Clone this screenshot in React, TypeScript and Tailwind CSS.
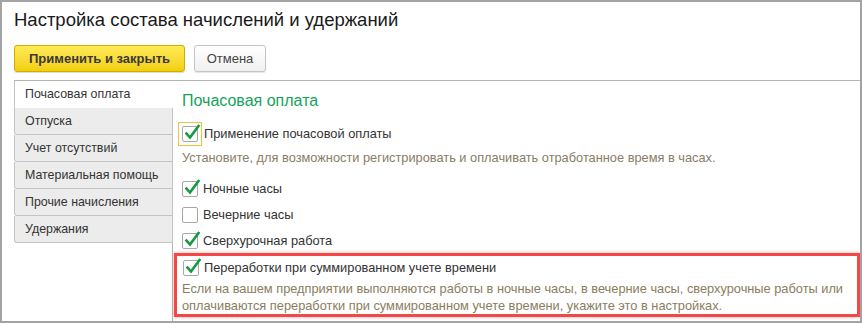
import React from "react";

function Check({ checked }: { checked: boolean }) {
  return (
    <span className="relative inline-block w-[16px] h-[16px] border border-[#a8a8a8] rounded-[2px] bg-white shrink-0">
      {checked && (
        <svg
          className="absolute left-[1px] top-[-4px] overflow-visible"
          width="16"
          height="18"
          viewBox="0 0 16 18"
        >
          <path d="M2.5 10.5 L6 14.5 L14.5 3" fill="none" stroke="#15993f" strokeWidth="2.6" strokeLinecap="square" strokeLinejoin="miter" />
        </svg>
      )}
    </span>
  );
}

function Row({ label, checked, focus }: { label: string; checked: boolean; focus?: boolean }) {
  return (
    <div className="flex items-center h-[26px] pl-[6px]">
      {focus ? (
        <span className="flex items-center justify-center w-[24px] h-[24px] -ml-[4px] -mr-[3px] border border-[#f0c43a]">
          <Check checked={checked} />
        </span>
      ) : (
        <Check checked={checked} />
      )}
      <span className="ml-[5px] text-[12.8px] text-[#333]">{label}</span>
    </div>
  );
}

const tabs = ["Отпуска", "Учет отсутствий", "Материальная помощь", "Прочие начисления", "Удержания"];

export default function App() {
  return (
    <div className="w-[862px] h-[323px] border-2 border-[#a3a3a3] bg-white font-['Liberation_Sans',Arial,sans-serif] flex flex-col overflow-hidden">
      <div className="pl-[12px] pt-[7px] h-[30px] leading-[22px] text-[18.5px] text-[#1a1a1a]">
        Настройка состава начислений и удержаний
      </div>
      <div className="flex pl-[12px] mt-[13px] gap-[9px]">
        <button className="h-[27px] w-[171px] rounded-[3px] border border-[#cfae00] bg-gradient-to-b from-[#ffea55] to-[#f3cf00] text-[13px] font-bold text-[#3a3a3a] shadow-[0_1px_1px_rgba(0,0,0,0.15)]">
          Применить и закрыть
        </button>
        <button className="h-[27px] w-[72px] rounded-[3px] border border-[#c4c4c4] bg-gradient-to-b from-white to-[#f0f0f0] text-[13px] text-[#444] shadow-[0_1px_1px_rgba(0,0,0,0.1)]">
          Отмена
        </button>
      </div>
      <div className="flex flex-1 mt-[8px] ml-[12px] border-t border-[#b4b4b4]">
        <div className="w-[159px] flex flex-col">
          <div className="h-[27px] flex items-center pl-[10px] border-l border-[#c4c4c4] bg-white text-[12.4px] text-[#333]">
            Почасовая оплата
          </div>
          {tabs.map((t) => (
            <div
              key={t}
              className="h-[27px] flex items-center pl-[10px] border-l border-b border-r border-[#c4c4c4] rounded-bl-[3px] bg-[#ececec] text-[12.4px] text-[#333] whitespace-nowrap"
            >
              {t}
            </div>
          ))}
          <div className="flex-1 border-r border-[#b4b4b4]" />
        </div>
        <div className="flex-1 flex flex-col pl-[3px]">
          <div className="pt-[10px] pl-[6px] h-[31px] leading-[20px] text-[16px] text-[#14a35a]">Почасовая оплата</div>
          <div className="h-[9px]" />
          <Row label="Применение почасовой оплаты" checked focus />
          <div className="pl-[6px] leading-[17px] text-[12.8px] text-[#8a7d66] mt-[2px]">
            Установите, для возможности регистрировать и оплачивать отработанное время в часах.
          </div>
          <div className="h-[10px]" />
          <Row label="Ночные часы" checked />
          <Row label="Вечерние часы" checked={false} />
          <Row label="Сверхурочная работа" checked />
          <div className="-mt-px -ml-[2px] border-[3px] border-[#f24848] shadow-[0_0_3px_rgba(242,72,72,0.5)]">
            <div className="h-[24px] flex items-center">
              <Row label="Переработки при суммированном учете времени" checked />
            </div>
            <div className="pl-[5px] leading-[17px] text-[12.8px] text-[#8a7d5e] whitespace-nowrap">
              Если на вашем предприятии выполняются работы в ночные часы, в вечерние часы, сверхурочные работы или
              <br />
              оплачиваются переработки при суммированном учете времени, укажите это в настройках.
            </div>
          </div>
        </div>
      </div>
    </div>
  );
}
